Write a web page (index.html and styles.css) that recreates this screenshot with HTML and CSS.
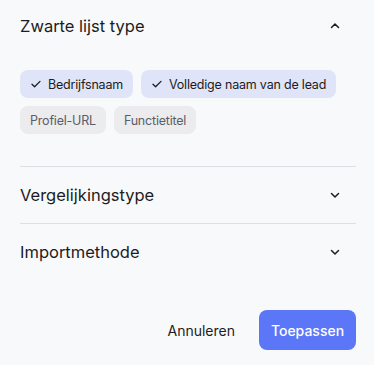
FILE: index.html
```html
<!DOCTYPE html>
<html lang="nl">
<head>
    <meta charset="UTF-8">
    <meta name="viewport" content="width=device-width, initial-scale=1.0">
    <title>Filters</title>
    <link rel="stylesheet" href="styles.css">
</head>
<body>
    <div class="panel">
        <div class="section open">
            <div class="section-head">
                <span class="section-title">Zwarte lijst type</span>
                <svg class="chevron" width="12" height="12" viewBox="0 0 12 12"><path d="M2.5 7.5 6 4l3.5 3.5" fill="none" stroke="#1c1c22" stroke-width="1.5" stroke-linecap="round" stroke-linejoin="round"/></svg>
            </div>
            <div class="chips">
                <span class="chip selected"><svg width="12" height="12" viewBox="0 0 12 12"><path d="M2 6.3 4.6 8.8 10 3.4" fill="none" stroke="#1c1c22" stroke-width="1.3" stroke-linecap="round" stroke-linejoin="round"/></svg>Bedrijfsnaam</span>
                <span class="chip selected"><svg width="12" height="12" viewBox="0 0 12 12"><path d="M2 6.3 4.6 8.8 10 3.4" fill="none" stroke="#1c1c22" stroke-width="1.3" stroke-linecap="round" stroke-linejoin="round"/></svg>Volledige naam van de lead</span>
                <span class="chip">Profiel-URL</span>
                <span class="chip">Functietitel</span>
            </div>
        </div>
        <div class="section">
            <div class="section-head">
                <span class="section-title">Vergelijkingstype</span>
                <svg class="chevron" width="12" height="12" viewBox="0 0 12 12"><path d="M2.5 4.5 6 8l3.5-3.5" fill="none" stroke="#1c1c22" stroke-width="1.5" stroke-linecap="round" stroke-linejoin="round"/></svg>
            </div>
        </div>
        <div class="section">
            <div class="section-head">
                <span class="section-title">Importmethode</span>
                <svg class="chevron" width="12" height="12" viewBox="0 0 12 12"><path d="M2.5 4.5 6 8l3.5-3.5" fill="none" stroke="#1c1c22" stroke-width="1.5" stroke-linecap="round" stroke-linejoin="round"/></svg>
            </div>
        </div>
        <div class="actions">
            <button class="btn-cancel">Annuleren</button>
            <button class="btn-apply">Toepassen</button>
        </div>
    </div>
</body>
</html>
```

FILE: styles.css
```css
body {
    margin: 0;
    background-color: #f8f9fb;
    font-family: Inter, "Noto Sans", sans-serif;
    color: #1c1c22;
}
.panel {
    padding: 0 18px 0 20px;
}
.section {
    border-bottom: 1px solid #dedfe3;
}
.section:nth-child(3) {
    border-bottom: none;
}
.section-head {
    display: flex;
    justify-content: space-between;
    align-items: center;
    height: 56px;
    padding-right: 15px;
}
.section.open .section-head {
    height: 52px;
}
.section-title {
    font-size: 16.5px;
    font-weight: 400;
}
.chips {
    display: flex;
    flex-wrap: wrap;
    gap: 8px;
    padding: 18px 0 32px;
}
.chip {
    display: inline-flex;
    align-items: center;
    gap: 6px;
    height: 28px;
    padding: 0 10px;
    border-radius: 8px;
    background-color: #ececef;
    color: #5b5d66;
    font-size: 12.5px;
    letter-spacing: -0.2px;
}
.chip.selected {
    background-color: #e0e4f8;
    color: #1c1c22;
}
.actions {
    display: flex;
    justify-content: flex-end;
    align-items: center;
    gap: 8px;
    padding-top: 30px;
}
button {
    font-family: inherit;
    font-size: 14px;
    border: none;
    cursor: pointer;
}
.btn-cancel {
    background: none;
    color: #1c1c22;
    padding: 0 16px;
    height: 40px;
}
.btn-apply {
    background-color: #5b76f7;
    color: white;
    font-weight: 500;
    height: 40px;
    width: 97px;
    border-radius: 8px;
}
```
